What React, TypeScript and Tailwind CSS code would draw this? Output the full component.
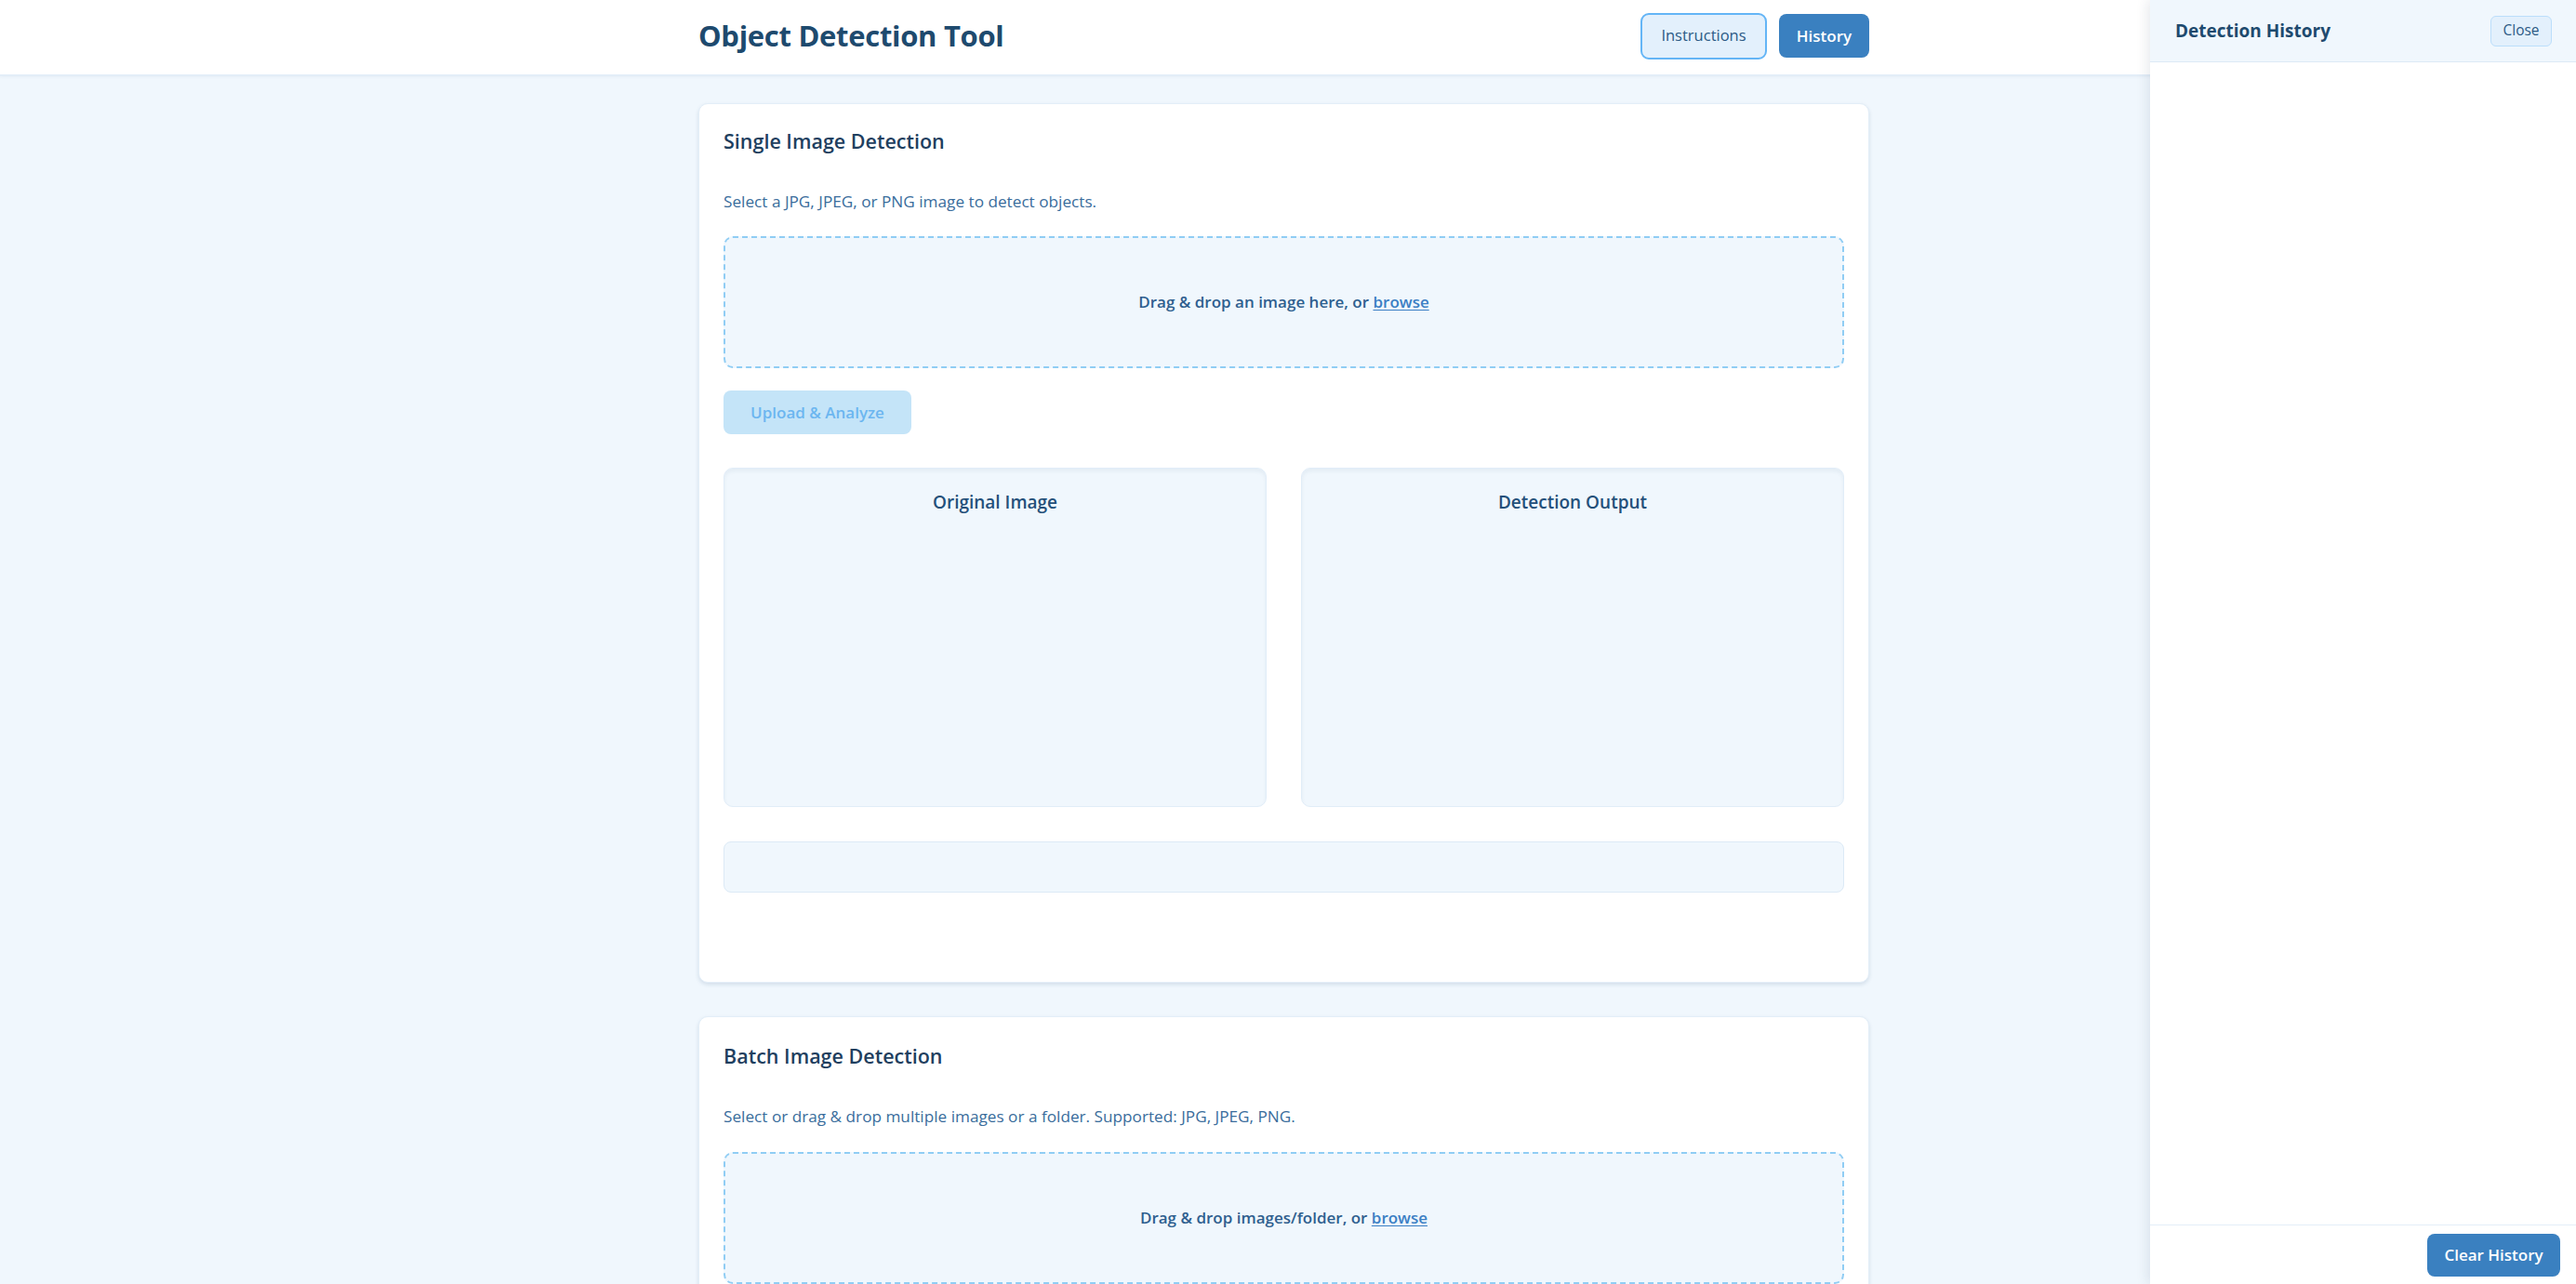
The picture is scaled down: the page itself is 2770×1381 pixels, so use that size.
import React from "react";

const font = "font-['Open_Sans','Liberation_Sans',sans-serif]";

function DropZone({ text }: { text: string }) {
  return (
    <div className="flex h-[142px] w-full items-center justify-center rounded-[10px] border-2 border-dashed border-[#90cdf4] bg-[#f0f7fd]">
      <p className="text-[17px] font-semibold text-[#2f5f8f]">
        {text}
        <span className="text-[#3b7fc4] underline underline-offset-2">browse</span>
      </p>
    </div>
  );
}

function Panel({ title }: { title: string }) {
  return (
    <div className="h-[365px] rounded-[10px] border border-[#e1edf8] bg-[#f0f7fd] pt-[21px] text-center shadow-[inset_0_3px_4px_rgba(30,74,110,0.06)]">
      <h3 className="text-[19px] leading-[30px] font-semibold text-[#24507a]">{title}</h3>
    </div>
  );
}

export default function App() {
  return (
    <div className={`relative h-[1381px] w-full overflow-hidden bg-[#f0f7fd] ${font}`}>
      <div className="w-[2761px]">
        <header className="h-[82px] border-b-2 border-[#e3eef8] bg-white shadow-[0_1px_3px_rgba(30,74,110,0.05)]">
          <div className="mx-auto flex h-full w-[1259px] items-center justify-between pb-[3px]">
            <h1 className="text-[31px] font-bold tracking-[-0.3px] text-[#1e4a6e]">Object Detection Tool</h1>
            <div className="flex items-center gap-[13px]">
              <button className="h-[50px] w-[136px] rounded-[9px] border-2 border-[#64b5f6] bg-[#e3f0fc] text-[16.5px] font-medium text-[#2c5a85]">
                Instructions
              </button>
              <button className="h-[47px] w-[97px] rounded-[8px] bg-[#3a80c0] text-[17px] font-semibold text-white">
                History
              </button>
            </div>
          </div>
        </header>

        <main className="mx-auto flex w-[1259px] flex-col gap-[36px] pt-[29px]">
          <section className="rounded-[10px] border border-[#e3eef8] bg-white px-[26px] pt-[25px] pb-[96px] shadow-[0_2px_4px_rgba(30,74,110,0.14)]">
            <h2 className="text-[21.5px] leading-[30px] font-semibold text-[#1f3f5f]">Single Image Detection</h2>
            <p className="mt-[38px] text-[17.2px] leading-[24px] text-[#3a6d9c]">
              Select a JPG, JPEG, or PNG image to detect objects.
            </p>
            <div className="mt-[25px]">
              <DropZone text="Drag & drop an image here, or " />
            </div>
            <button className="mt-[24px] h-[47px] w-[202px] rounded-[8px] bg-[#c4e4f8] text-[17px] font-semibold text-[#6cb6f0]">
              Upload &amp; Analyze
            </button>
            <div className="mt-[36px] grid grid-cols-2 gap-[37px]">
              <Panel title="Original Image" />
              <Panel title="Detection Output" />
            </div>
            <div className="mt-[37px] h-[55px] rounded-[8px] border border-[#dceaf6] bg-[#f0f7fd]" />
          </section>

          <section className="rounded-[10px] border border-[#e3eef8] bg-white px-[26px] pt-[27px] pb-[96px] shadow-[0_2px_4px_rgba(30,74,110,0.14)]">
            <h2 className="text-[21.5px] leading-[30px] font-semibold text-[#1f3f5f]">Batch Image Detection</h2>
            <p className="mt-[38px] text-[17.2px] leading-[24px] text-[#3a6d9c]">
              Select or drag &amp; drop multiple images or a folder. Supported: JPG, JPEG, PNG.
            </p>
            <div className="mt-[26px]">
              <DropZone text="Drag & drop images/folder, or " />
            </div>
          </section>
        </main>
      </div>

      <aside className="absolute top-0 right-0 flex h-full w-[458px] flex-col bg-white shadow-[-3px_0_12px_rgba(30,50,80,0.10)]">
        <div className="flex h-[67px] items-center justify-between border-b border-[#dde9f5] bg-[#f0f7fd] pr-[26px] pl-[27px]">
          <h2 className="text-[19px] font-bold text-[#1e4a6e]">Detection History</h2>
          <button className="h-[33px] w-[66px] rounded-[6px] border border-[#bbdefb] bg-[#e3f0fc] text-[15.5px] text-[#2c5a85]">
            Close
          </button>
        </div>
        <div className="flex-1" />
        <div className="flex justify-end border-t border-[#e3eef8] pt-[9px] pr-[17px] pb-[8px]">
          <button className="h-[46px] w-[143px] rounded-[8px] bg-[#3a80c0] text-[17px] font-semibold text-white">
            Clear History
          </button>
        </div>
      </aside>
    </div>
  );
}
